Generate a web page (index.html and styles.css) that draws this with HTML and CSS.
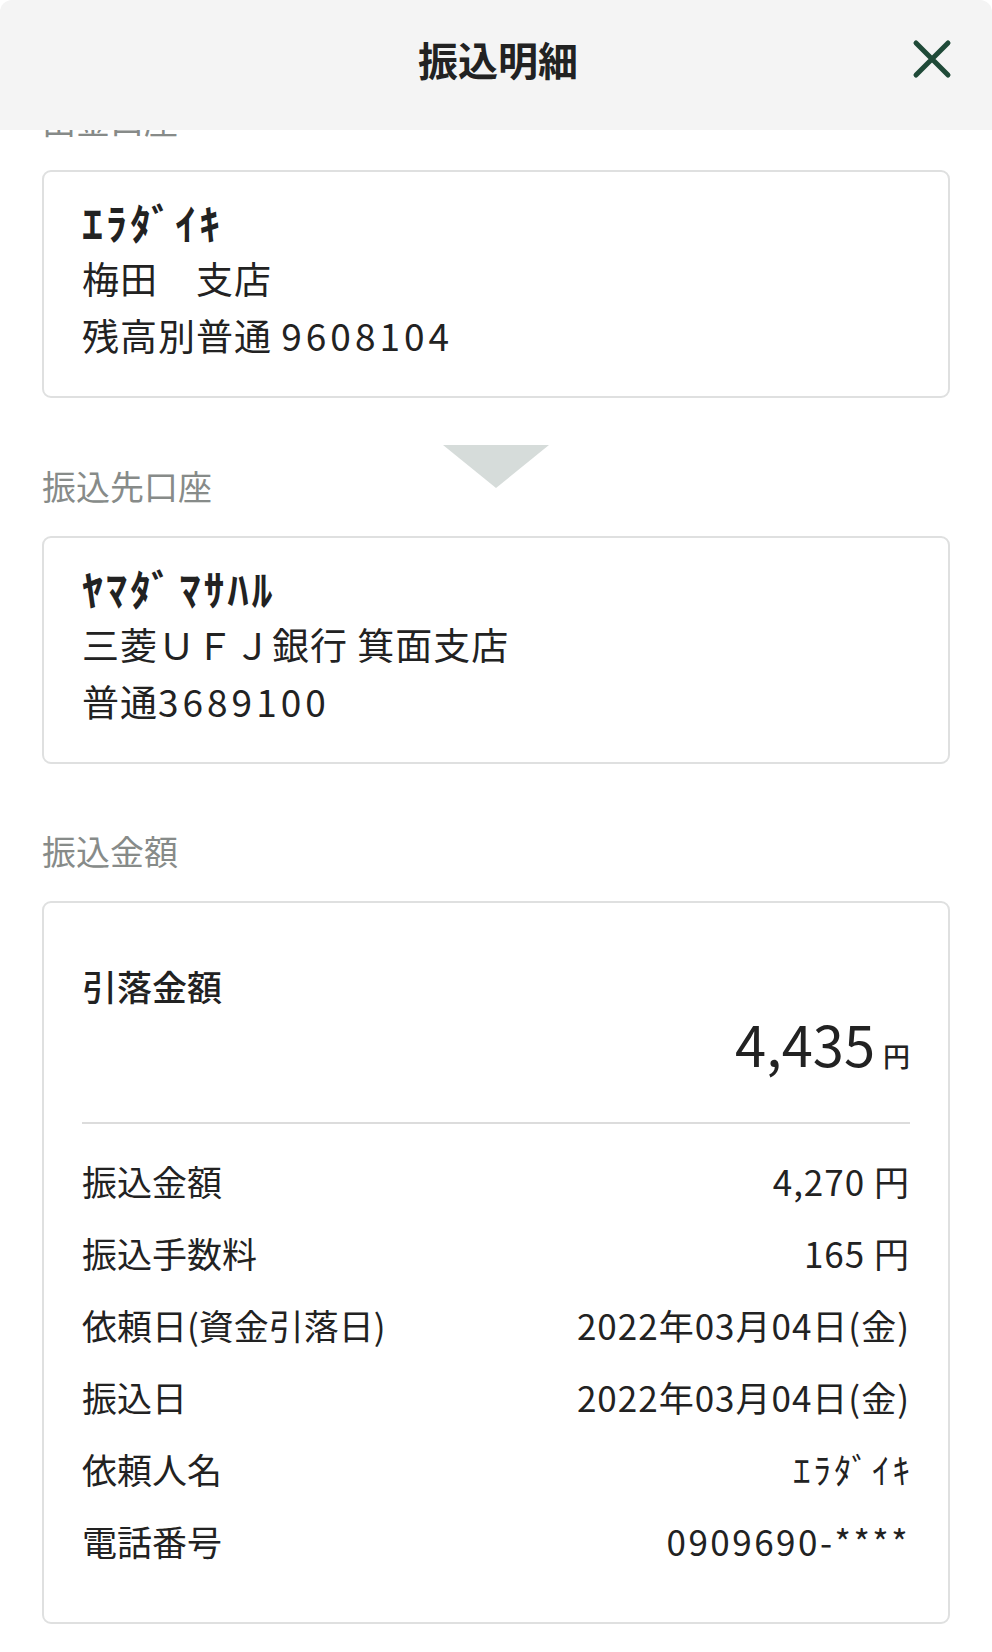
FILE: index.html
```html
<!DOCTYPE html>
<html lang="ja">
<head>
<meta charset="utf-8">
<title>振込明細</title>
<link rel="stylesheet" href="styles.css">
</head>
<body>
<header class="sheet-header">
  <span class="sheet-spacer"></span>
  <h1 class="sheet-title">振込明細</h1>
  <button class="sheet-close" aria-label="閉じる">
    <svg width="40" height="40" viewBox="0 0 40 40"><path d="M4 4 L36 36 M36 4 L4 36" stroke="#1f4a38" stroke-width="5" stroke-linecap="round" fill="none"/></svg>
  </button>
</header>

<main class="content">
  <section class="section">
    <h2 class="section-label">出金口座</h2>
    <div class="card account-card">
      <p class="account-name">ｴﾗﾀﾞｲｷ</p>
      <p class="account-line">梅田　支店</p>
      <p class="account-line">残高別普通 <span class="num">9608104</span></p>
    </div>
  </section>

  <section class="section section-to">
    <div class="section-head">
      <h2 class="section-label">振込先口座</h2>
      <svg class="arrow" width="106" height="43" viewBox="0 0 106 43"><polygon points="0,0 106,0 53,43" fill="#d6dcda"/></svg>
    </div>
    <div class="card account-card">
      <p class="account-name">ﾔﾏﾀﾞ ﾏｻﾊﾙ</p>
      <p class="account-line">三菱ＵＦＪ銀行 箕面支店</p>
      <p class="account-line">普通<span class="num">3689100</span></p>
    </div>
  </section>

  <section class="section section-amount">
    <h2 class="section-label">振込金額</h2>
    <div class="card amount-card">
      <p class="total-label">引落金額</p>
      <p class="total-amount"><span class="total-number">4,435</span><span class="total-yen">円</span></p>
      <hr class="divider">
      <dl class="detail-list">
        <div class="detail-row"><dt>振込金額</dt><dd>4,270 円</dd></div>
        <div class="detail-row"><dt>振込手数料</dt><dd>165 円</dd></div>
        <div class="detail-row"><dt>依頼日(資金引落日)</dt><dd>2022年03月04日(金)</dd></div>
        <div class="detail-row"><dt>振込日</dt><dd>2022年03月04日(金)</dd></div>
        <div class="detail-row"><dt>依頼人名</dt><dd class="kana">ｴﾗﾀﾞｲｷ</dd></div>
        <div class="detail-row"><dt>電話番号</dt><dd class="phone">0909690-****</dd></div>
      </dl>
    </div>
  </section>
</main>
</body>
</html>
```

FILE: styles.css
```css
* {
  box-sizing: border-box;
}

html, body {
  margin: 0;
  padding: 0;
  background: #ffffff;
}

body {
  font-family: "Noto Sans CJK JP", "Noto Sans", sans-serif;
  color: #222222;
}

p, h1, h2, dl, dt, dd {
  margin: 0;
  padding: 0;
  font-weight: 400;
}

.sheet-header {
  position: fixed;
  top: 0;
  left: 0;
  right: 0;
  height: 130px;
  background: #f4f4f4;
  border-radius: 12px 12px 0 0;
  display: grid;
  grid-template-columns: 1fr auto 1fr;
  align-items: center;
  padding: 0 40px 12px 44px;
  z-index: 10;
}

.sheet-title {
  font-size: 40px;
  line-height: 50px;
  font-weight: 700;
  color: #222;
}

.sheet-close {
  justify-self: end;
  width: 40px;
  height: 40px;
  padding: 0;
  border: 0;
  background: none;
  display: flex;
}

.content {
  padding: 100px 42px 28px;
}

.section-label {
  font-size: 34px;
  line-height: 40px;
  color: #878b89;
  font-weight: 400;
}

.section > .section-label,
.section-head {
  margin-bottom: 30px;
}

.section-to {
  margin-top: 47px;
}

.section-amount {
  margin-top: 67px;
}

.section-head {
  display: grid;
  grid-template-columns: 1fr auto 1fr;
  align-items: end;
}

.arrow {
  display: block;
  margin-bottom: 18px;
}

.card {
  border: 2px solid #dfe0e0;
  border-radius: 9px;
  background: #fff;
}

.account-card {
  padding: 21px 38px 32px;
}

.account-name {
  font-size: 42px;
  line-height: 57px;
  font-weight: 700;
  letter-spacing: 3px;
  word-spacing: -8px;
}

.account-line {
  font-size: 37px;
  line-height: 57px;
  letter-spacing: 1px;
}

.num {
  letter-spacing: 4px;
}

.amount-card {
  padding: 58px 38px 45px;
}

.total-label {
  font-size: 35px;
  line-height: 50px;
  font-weight: 500;
}

.total-amount {
  display: flex;
  justify-content: flex-end;
  align-items: baseline;
  gap: 8px;
  line-height: 64px;
}

.total-number {
  font-size: 56px;
  font-weight: 400;
}

.total-yen {
  font-size: 27px;
  line-height: 1;
  font-weight: 500;
}

.divider {
  margin: 47px 0 0;
  border: 0;
  height: 2px;
  background: #dcdcdc;
}

.detail-list {
  margin-top: 21px;
}

.detail-row {
  display: flex;
  justify-content: space-between;
  font-size: 35px;
  line-height: 72px;
}

.detail-row dd {
  text-align: right;
  letter-spacing: 1px;
}

.detail-row .phone {
  letter-spacing: 2.5px;
}

.detail-row .kana {
  letter-spacing: 3px;
  margin-right: -3px;
}
```
